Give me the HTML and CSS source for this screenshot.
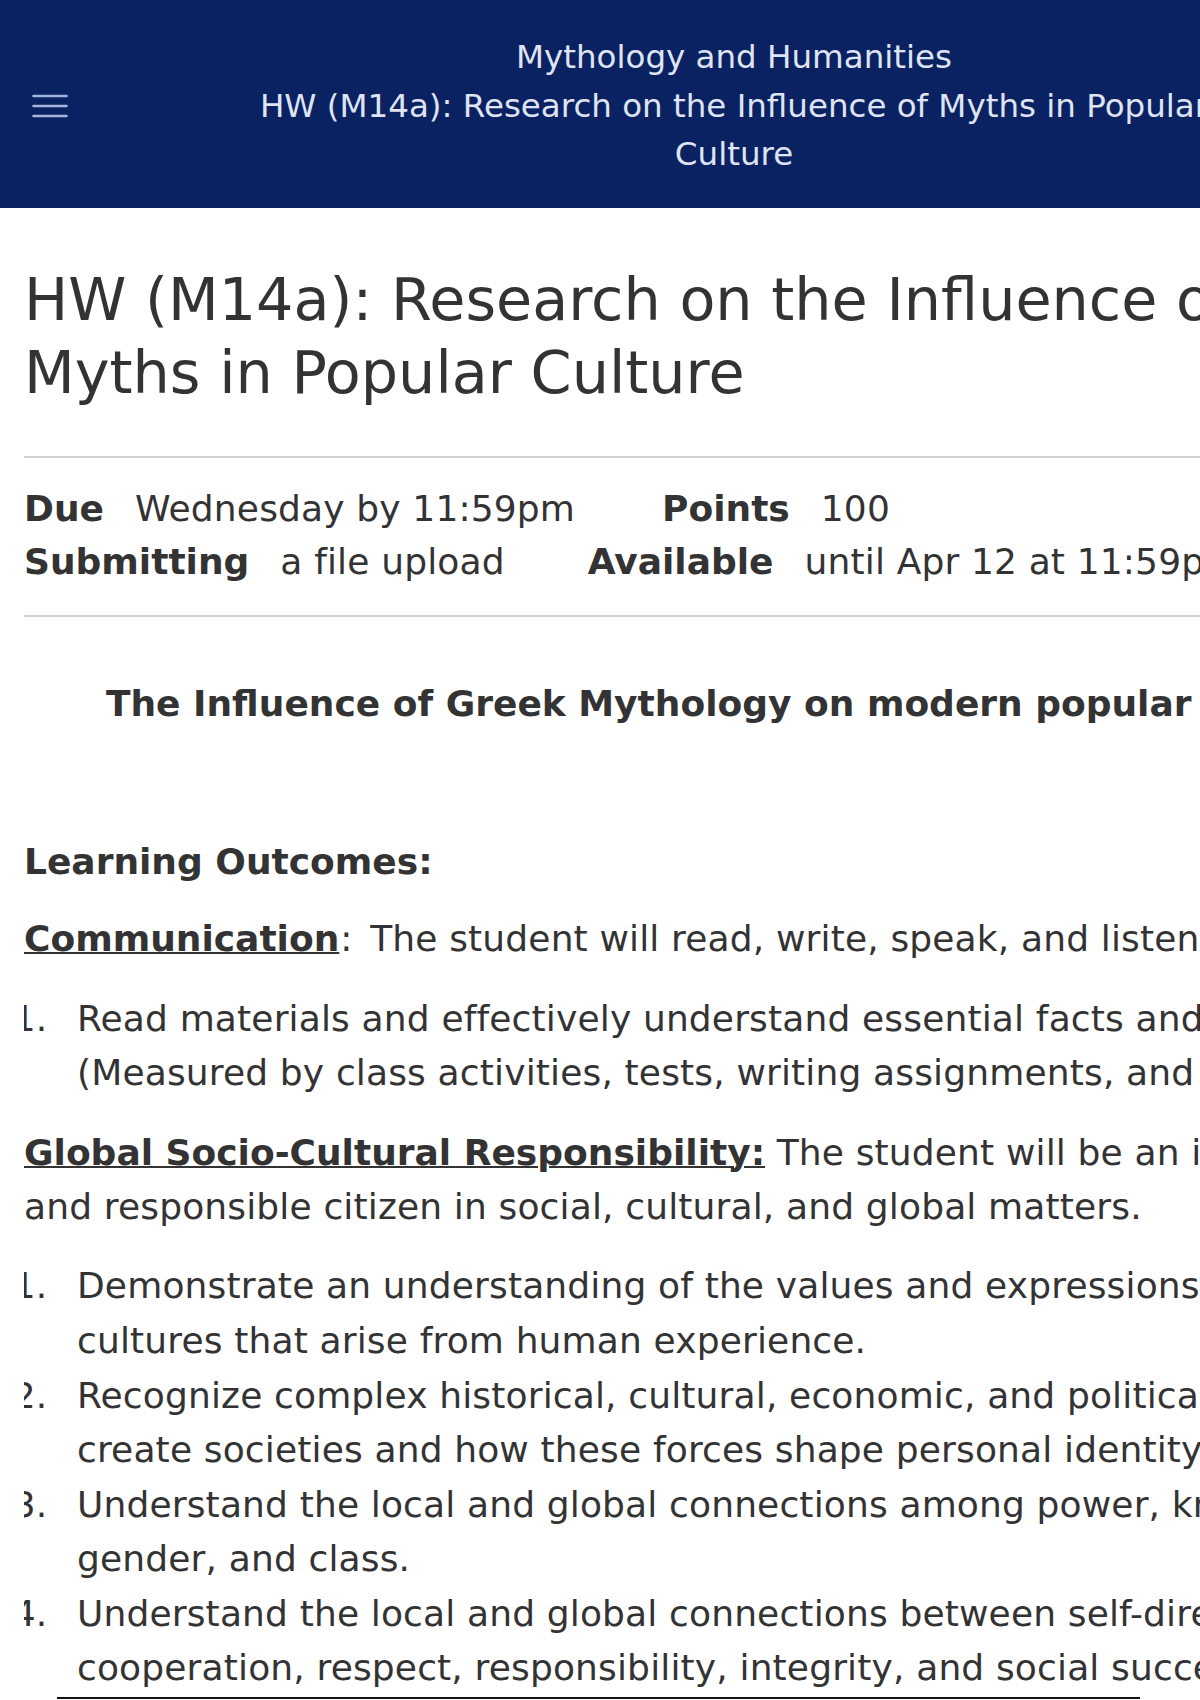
FILE: index.html
```html
<!DOCTYPE html>
<html lang="en">
<head>
<meta charset="utf-8">
<title>HW (M14a): Research on the Influence of Myths in Popular Culture</title>
<link rel="stylesheet" href="styles.css">
</head>
<body>
<div class="page">
  <header class="topbar">
    <button class="menu-btn" type="button" aria-label="Open menu">
      <svg width="36" height="24" viewBox="0 0 36 24" aria-hidden="true">
        <path d="M1.5 2H34.5M1.5 12H34.5M1.5 22H34.5" stroke="#a3b5db" stroke-width="2.6" stroke-linecap="round" fill="none"/>
      </svg>
    </button>
    <div class="topbar-title">
      <div>Mythology and Humanities</div>
      <div>HW (M14a): Research on the Influence of Myths in Popular Culture</div>
    </div>
    <div class="topbar-side"></div>
  </header>

  <main class="content">
    <h1 class="title">HW (M14a): Research on the Influence of Myths in Popular Culture</h1>
    <hr class="rule">
    <div class="details">
      <div class="details-row details-row-first">
        <span class="group"><span class="label">Due</span><span class="value">Wednesday by 11:59pm</span></span>
        <span class="group"><span class="label">Points</span><span class="value">100</span></span>
      </div>
      <div class="details-row details-row-second">
        <span class="group"><span class="label">Submitting</span><span class="value">a file upload</span></span>
        <span class="group"><span class="label">Available</span><span class="value">until Apr 12 at 11:59pm</span></span>
      </div>
    </div>
    <hr class="rule rule-bottom">

    <div class="description">
      <p class="lead">The Influence of Greek Mythology on modern popular culture.</p>
      <p class="blank">&nbsp;</p>
      <p class="section-title">Learning Outcomes:</p>
      <p class="outcome"><span class="term">Communication</span><span class="term-colon">:</span> The student will read, write, speak, and listen well.</p>
      <ol class="list list-first">
        <li>Read materials and effectively understand essential facts and concepts. (Measured by class activities, tests, writing assignments, and discussions.)</li>
      </ol>
      <p class="outcome"><span class="term">Global Socio-Cultural Responsibility:</span> The student will be an intelligent and responsible citizen in social, cultural, and global matters.</p>
      <ol class="list list-last">
        <li>Demonstrate an understanding of the values and expressions of diverse cultures that arise from human experience.</li>
        <li>Recognize complex historical, cultural, economic, and political forces that create societies and how these forces shape personal identity.</li>
        <li>Understand the local and global connections among power, knowledge, gender, and class.</li>
        <li>Understand the local and global connections between self-directed growth, cooperation, respect, responsibility, integrity, and social success.</li>
      </ol>
    </div>
  </main>
</div>
<div class="bottom-edge"></div>
</body>
</html>
```

FILE: styles.css
```css
html {
  overflow: hidden;
}

body {
  margin: 0;
  background: #ffffff;
  color: #333333;
  font-family: "DejaVu Sans", Verdana, sans-serif;
}

.page {
  width: 1468px;
}

/* ---------- top bar ---------- */
.topbar {
  height: 208px;
  background: #0b2262;
  display: grid;
  grid-template-columns: 220px 1fr 220px;
  align-items: center;
}

.menu-btn {
  justify-self: start;
  margin-left: 32px;
  margin-top: 4px;
  padding: 0;
  border: 0;
  background: none;
  display: flex;
}

.topbar-title {
  text-align: center;
  color: #dfe4f3;
  font-size: 32.5px;
  line-height: 48.5px;
  padding-top: 4px;
}

/* ---------- content ---------- */
.content {
  margin: 0 24px;
  overflow: hidden;
}

.title {
  font-size: 58.8px;
  font-weight: normal;
  line-height: 73px;
  margin: 55px 60px 47px 0;
}

.rule {
  margin: 0;
  border: 0;
  height: 2px;
  background: #cfd3d6;
}

.details {
  padding: 25px 0 26px;
  font-size: 36px;
  line-height: 54px;
}

.details-row {
  display: flex;
  margin-top: -1px;
}

.group {
  display: flex;
}

.label {
  font-weight: bold;
  margin-right: 31px;
}

.value {
  letter-spacing: 0.15px;
}

.details-row-first .group {
  margin-right: 87px;
}

.details-row-second .group {
  margin-right: 83px;
}

.description {
  font-size: 36px;
  line-height: 54.6px;
  letter-spacing: 0.15px;
}

.description p {
  margin: 0 0 24.4px;
}

.lead {
  text-align: center;
  font-weight: bold;
  letter-spacing: 0;
  padding-top: 60px;
}

.section-title {
  font-weight: bold;
  letter-spacing: 0;
}

.description .section-title {
  margin-bottom: 22.4px;
}

.term {
  font-weight: bold;
  letter-spacing: 0;
  text-decoration: underline;
  text-decoration-thickness: 2px;
}

.term-colon {
  margin-left: 1px;
  margin-right: 6px;
}

.list {
  padding-left: 35px;
  margin: 25px 0 25px;
}

.list li {
  padding-left: 18px;
}

.list-last {
  margin-top: 23px;
  margin-bottom: 0;
}

.bottom-edge {
  position: fixed;
  left: 57px;
  bottom: 1px;
  width: 1083px;
  height: 2px;
  background: #111111;
}
```
